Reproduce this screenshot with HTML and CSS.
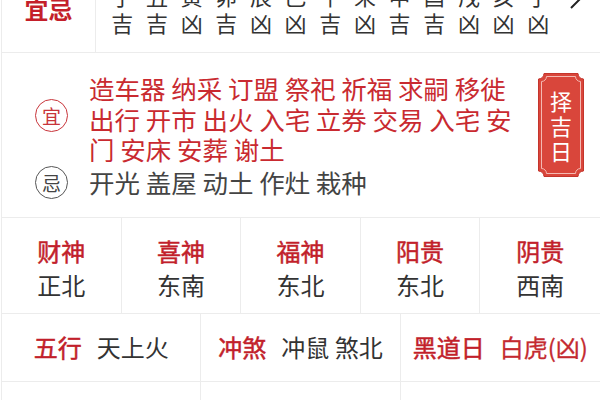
FILE: index.html
```html
<!DOCTYPE html>
<html lang="zh-CN">
<head>
<meta charset="utf-8">
<link rel="stylesheet" href="styles.css">
</head>
<body>
<div class="card">
  <div class="hours">
    <div class="hours-label">宜忌</div>
    <div class="hours-grid">
      <span>子</span><span>丑</span><span>寅</span><span>卯</span><span>辰</span><span>巳</span><span>午</span><span>未</span><span>申</span><span>酉</span><span>戌</span><span>亥</span><span>子</span>
      <span>吉</span><span>吉</span><span>凶</span><span>吉</span><span>凶</span><span>凶</span><span>吉</span><span>凶</span><span>吉</span><span>吉</span><span>凶</span><span>凶</span><span>凶</span>
    </div>
    <svg class="chev" width="14" height="24" viewBox="0 0 14 24"><path d="M2 2 L12 12 L2 22" fill="none" stroke="#222" stroke-width="2"/></svg>
  </div>

  <div class="yiji">
    <div class="yiji-main">
      <div class="yiji-row yi">
        <span class="circle circle-red">宜</span>
        <p class="yi-text">造车器 纳采 订盟 祭祀 祈福 求嗣 移徙 出行 开市 出火 入宅 立券 交易 入宅 安门 安床 安葬 谢土</p>
      </div>
      <div class="yiji-row ji">
        <span class="circle circle-gray">忌</span>
        <p class="ji-text">开光 盖屋 动土 作灶 栽种</p>
      </div>
    </div>
    <div class="badge">
      <svg class="badge-bg" viewBox="0 0 46 104" preserveAspectRatio="none">
        <path d="M6 0.5 H40 A6 6 0 0 0 45.5 6 V98 A6 6 0 0 0 40 103.5 H6 A6 6 0 0 0 0.5 98 V6 A6 6 0 0 0 6 0.5 Z" fill="#d9463b" stroke="#c4352c" stroke-width="1"/>
        <path d="M8.5 3.5 H37.5 A5 5 0 0 0 42.5 8.5 V95.5 A5 5 0 0 0 37.5 100.5 H8.5 A5 5 0 0 0 3.5 95.5 V8.5 A5 5 0 0 0 8.5 3.5 Z" fill="none" stroke="#f4b9b2" stroke-width="1"/>
      </svg>
      <span>择</span><span>吉</span><span>日</span>
    </div>
  </div>

  <div class="gods">
    <div class="god"><div class="lbl">财神</div><div class="val">正北</div></div>
    <div class="god"><div class="lbl">喜神</div><div class="val">东南</div></div>
    <div class="god"><div class="lbl">福神</div><div class="val">东北</div></div>
    <div class="god"><div class="lbl">阳贵</div><div class="val">东北</div></div>
    <div class="god"><div class="lbl">阴贵</div><div class="val">西南</div></div>
  </div>

  <div class="info">
    <div class="info-cell"><span class="lbl">五行</span><span class="val">天上火</span></div>
    <div class="info-cell"><span class="lbl">冲煞</span><span class="val">冲鼠 煞北</span></div>
    <div class="info-cell"><span class="lbl">黑道日</span><span class="lbl lbl-plain">白虎(凶)</span></div>
  </div>

  <div class="info">
    <div class="info-cell"></div>
    <div class="info-cell"></div>
    <div class="info-cell"></div>
  </div>
</div>
</body>
</html>
```

FILE: styles.css
```css
* { box-sizing: border-box; }
html, body { margin: 0; padding: 0; background: #fff; overflow: hidden; }
body {
  font-family: "Noto Sans CJK SC", "Noto Sans", sans-serif;
  color: #333;
  width: 600px;
  height: 400px;
}
.card {
  margin-left: 1px;
  border-left: 1px solid #ececec;
}

/* hours */
.hours {
  display: flex;
  height: 85px;
  margin-top: -32px;
  border-bottom: 1px solid #ececec;
}
.hours-label {
  width: 94px;
  border-right: 1px solid #ececec;
  display: flex;
  align-items: center;
  justify-content: center;
  color: #c41f2a;
  font-size: 24px;
  font-weight: 700;
  padding-bottom: 4px;
}
.hours-grid {
  display: grid;
  grid-template-columns: repeat(13, 34.67px);
  align-content: center;
  padding-left: 9px;
  padding-bottom: 2px;
  font-size: 22px;
  line-height: 27px;
  color: #333;
}
.hours-grid span { text-align: center; }
.chev {
  margin-left: auto;
  margin-right: 17px;
  margin-top: 18px;
}

/* yi ji */
.yiji {
  display: flex;
  padding-right: 16px;
  border-bottom: 1px solid #ececec;
}
.yiji-main {
  flex: 1;
  padding: 20px 0 18px 33px;
}
.yiji-row {
  display: flex;
}
.yiji-row.yi { align-items: flex-start; }
.yiji-row.ji { align-items: center; margin-top: 1px; }
.yi .circle { margin-top: 26px; }
.circle {
  width: 33px;
  height: 33px;
  border-radius: 50%;
  flex: none;
  display: flex;
  align-items: center;
  justify-content: center;
  font-size: 19px;
  line-height: 1;
  margin-right: 21px;
}
.circle-red { border: 1.5px solid #c8343a; color: #c8343a; }
.circle-gray { border: 1.5px solid #555; color: #444; }
.yi-text, .ji-text {
  margin: 0;
  width: 440px;
  font-size: 25.5px;
  line-height: 30.5px;
}
.yi-text { color: #c92a30; }
.ji-text { color: #444; }

.badge {
  position: relative;
  width: 46px;
  height: 104px;
  margin-top: 20px;
  margin-left: auto;
  flex: none;
  display: flex;
  flex-direction: column;
  align-items: center;
  justify-content: center;
  color: #fff;
  font-size: 22px;
  line-height: 25px;
}
.badge-bg {
  position: absolute;
  left: 0; top: 0;
  width: 100%;
  height: 100%;
}
.badge span { position: relative; }

/* gods */
.gods {
  display: grid;
  grid-template-columns: repeat(5, 1fr);
  border-bottom: 1px solid #ececec;
}
.god {
  padding: 16px 0 11px;
  text-align: center;
  border-right: 1px solid #ececec;
  font-size: 24px;
  line-height: 34px;
}
.god:last-child { border-right: none; }
.lbl {
  color: #c21f2b;
  font-weight: 400;
  -webkit-text-stroke: 0.5px #c21f2b;
}
.lbl-plain { -webkit-text-stroke: 0.3px #c42a30; color: #c42a30; }
.val { color: #333; }

/* info rows */
.info {
  display: grid;
  grid-template-columns: repeat(3, 1fr);
  border-bottom: 1px solid #ececec;
}
.info-cell {
  display: flex;
  justify-content: center;
  gap: 15px;
  padding: 16px 0 16px;
  height: 67px;
  font-size: 24px;
  line-height: 34px;
  border-right: 1px solid #ececec;
  white-space: nowrap;
}
.info-cell:last-child { border-right: none; }
```
